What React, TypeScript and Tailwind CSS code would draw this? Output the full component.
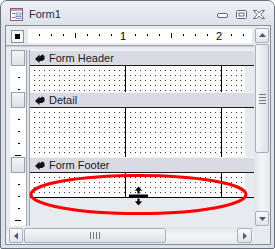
import React from 'react'

const DOTS =
  'bg-[linear-gradient(to_right,#fff_4px,transparent_4px),linear-gradient(to_bottom,#fff_4px,#3a3a3a_4px)] bg-[length:5px_5px]'

function FormIcon() {
  return (
    <svg width="13" height="13" viewBox="0 0 13 13" className="block">
      <rect x="0.5" y="0.5" width="12" height="12" fill="#fff" stroke="#8d5a7e" />
      <rect x="1" y="1" width="11" height="2" fill="#c99ab8" />
      <rect x="2" y="5" width="3" height="1" fill="#5d7fb8" />
      <rect x="6" y="5" width="5" height="2" fill="none" stroke="#5d7fb8" strokeWidth="0.8" />
      <rect x="2" y="9" width="3" height="1" fill="#5d7fb8" />
      <rect x="6" y="8.5" width="5" height="2" fill="none" stroke="#5d7fb8" strokeWidth="0.8" />
    </svg>
  )
}

function WinButtons() {
  return (
    <div className="ml-auto flex items-center">
      <svg width="11" height="9" viewBox="0 0 11 9" className="block">
        <rect x="0.5" y="3.5" width="10" height="4" rx="1.5" fill="#fff" stroke="#5f6874" />
      </svg>
      <svg width="11" height="9" viewBox="0 0 11 9" className="block ml-[8px]">
        <rect x="0.5" y="0.5" width="10" height="8" rx="1" fill="#fff" stroke="#5f6874" />
        <rect x="3" y="3" width="5" height="3" fill="none" stroke="#5f6874" />
      </svg>
      <svg width="12" height="9" viewBox="0 0 12 9" className="block ml-[6px]">
        <path
          d="M0.5 0.5 H3.5 L6 2.8 L8.5 0.5 H11.5 L7.8 4.5 L11.5 8.5 H8.5 L6 6.2 L3.5 8.5 H0.5 L4.2 4.5 Z"
          fill="#fff"
          stroke="#5f6874"
        />
      </svg>
    </div>
  )
}

function HRuler() {
  const items: React.ReactNode[] = []
  for (let k = 1; k < 19; k++) {
    const x = -1 + k * 12
    if (k % 8 === 0) {
      items.push(
        <text key={k} x={x} y={10.5} fontSize="11" textAnchor="middle" fill="#000" fontFamily="'Liberation Sans', Arial, sans-serif">
          {k / 8}
        </text>
      )
    } else if (k % 4 === 0) {
      items.push(<rect key={k} x={x} y={4} width={1} height={5} fill="#000" />)
    } else {
      items.push(<rect key={k} x={x} y={5} width={1} height={2} fill="#000" />)
    }
  }
  return (
    <svg width="224" height="14" className="block bg-white">
      {items}
    </svg>
  )
}

function VRuler({ h }: { h: number }) {
  const ticks: number[] = []
  for (let y = 11; y < h; y += 12) ticks.push(y)
  return (
    <svg width="16" height={h} className="block bg-white">
      {ticks.map((y, i) => {
        const long = (i + 1) % 4 === 0
        return <rect key={y} x={long ? 5 : 8} y={y} width={long ? 6 : 2} height={1} fill="#000" />
      })}
    </svg>
  )
}

// the little black "section" arrow in front of each bar label
function SectionIcon() {
  return (
    <svg width="10" height="9" viewBox="0 0 10 9" className="block">
      <path d="M0 5 L4.5 0.5 L4.5 2.5 L7.5 0.5 L9.5 2 L9.5 5.5 L7 7 L4.5 7 L4.5 9 Z" fill="#111" />
    </svg>
  )
}

function Bar({ label }: { label: string }) {
  return (
    <div className="flex h-[16px]">
      <div className="w-[24px] flex">
        <div className="w-[5px]" />
        <div className="w-[14px] border border-[#9aa1ab] bg-gradient-to-b from-[#f4f5f7] to-[#dde1e6]" />
        <div className="w-[1px]" />
        <div className="w-[4px] border-x border-[#9ea5ae] bg-[#dfe3e8]" />
      </div>
      <div className="w-[224px] flex items-center pl-[5px] gap-[4px] bg-[#dadae4] border-t border-t-[#f4f4f8] border-b border-b-[#1c1c1c]">
        <SectionIcon />
        <span className="text-[11px] leading-none text-[#1a1a1a]">{label}</span>
      </div>
    </div>
  )
}

function DotArea({ className }: { className: string }) {
  return (
    <div className={`flex ${className}`}>
      <div className={`w-[95px] ${DOTS}`} />
      <div className="w-px bg-black" />
      <div className={`w-[95px] ${DOTS}`} />
      <div className="w-px bg-black" />
      <div className={`w-[23px] ${DOTS}`} />
      <div className="flex-1 bg-[#e7eaee]" />
    </div>
  )
}

function LeftRuler({ h }: { h: number }) {
  return (
    <div className="w-[24px] flex">
      <div className="w-[4px]" />
      <VRuler h={h} />
      <div className="w-[4px] border-x border-[#9ea5ae] bg-[#dfe3e8]" />
    </div>
  )
}

function Section({ h, cls }: { h: number; cls: string }) {
  return (
    <div className="flex">
      <LeftRuler h={h} />
      <div className="w-[224px]">
        <DotArea className={cls} />
      </div>
    </div>
  )
}

function ScrollBtn({ dir, className }: { dir: 'up' | 'down' | 'left' | 'right'; className: string }) {
  const paths = {
    up: 'M2 6 L5.5 2 L9 6 Z',
    down: 'M2 3 L9 3 L5.5 7 Z',
    left: 'M6 1.5 L2 5 L6 8.5 Z',
    right: 'M3 1.5 L7 5 L3 8.5 Z',
  }
  const vert = dir === 'up' || dir === 'down'
  return (
    <div
      className={`flex items-center justify-center rounded-[2px] border border-[#a9b0b9] bg-gradient-to-b from-[#fafbfc] to-[#dfe3e8] ${className}`}
    >
      <svg width={vert ? 11 : 9} height={vert ? 9 : 10} viewBox={vert ? '0 0 11 9' : '0 0 9 10'} className="block">
        <path d={paths[dir]} fill="#4a5c80" />
      </svg>
    </div>
  )
}

export default function App() {
  return (
    <div className="relative w-[275px] h-[249px] overflow-hidden bg-white font-['Liberation_Sans',Arial,sans-serif]">
      <div className="w-full h-full border border-[#6a717c] rounded-t-[7px] rounded-b-[2px] bg-[#dde2e9] flex flex-col">
        {/* title bar */}
        <div className="h-[24px] flex items-center pt-[3px] pl-[9px] pr-[9px] rounded-t-[6px] bg-gradient-to-b from-[#eef1f5] to-[#dde2e9]">
          <FormIcon />
          <span className="ml-[6px] text-[11px] leading-none text-[#1e2d44]">Form1</span>
          <WinButtons />
        </div>

        {/* client */}
        <div className="ml-[4px] w-[266px] h-[220px] border border-[#858d98] bg-[#e7eaee] grid grid-cols-[24px_224px_16px] grid-rows-[24px_177px_17px]">
          {/* top ruler row */}
          <div className="col-span-2 flex flex-col">
            <div className="flex items-start h-[19px] pt-[4px]">
              <div className="ml-[5px] w-[13px] h-[13px] border border-[#8b929c] bg-[#f7f8fa] flex items-center justify-center">
                <div className="w-[5px] h-[5px] bg-black" />
              </div>
              <div className="ml-[4px] -mt-px">
                <HRuler />
              </div>
            </div>
            <div className="h-px bg-[#9ea5ae]" />
            <div className="h-px bg-[#c6cbd2]" />
            <div className="flex-1" />
          </div>

          {/* vertical scrollbar */}
          <div className="row-span-2 flex flex-col items-center bg-gradient-to-r from-[#e0e3e7] via-[#f4f5f7] to-[#e5e8eb] pt-[2px] pb-[1px]">
            <ScrollBtn dir="up" className="w-[14px] h-[15px]" />
            <div className="mt-px w-[14px] h-[109px] rounded-[2px] border border-[#a9b0b9] bg-gradient-to-r from-[#f6f7f9] to-[#dde1e6] flex flex-col items-center justify-center gap-[2px]">
              <div className="w-[7px] h-px bg-[#6f7886]" />
              <div className="w-[7px] h-px bg-[#6f7886]" />
              <div className="w-[7px] h-px bg-[#6f7886]" />
              <div className="w-[7px] h-px bg-[#6f7886]" />
            </div>
            <div className="flex-1" />
            <ScrollBtn dir="down" className="w-[14px] h-[15px]" />
          </div>

          {/* form body */}
          <div className="col-span-2 flex flex-col overflow-hidden">
            <Bar label="Form Header" />
            <Section h={26} cls="h-[26px]" />
            <Bar label="Detail" />
            <Section h={49} cls="h-[49px]" />
            <Bar label="Form Footer" />
            <div className="flex">
              <div className="flex flex-col">
                <LeftRuler h={53} />
                <div className="h-px" />
              </div>
              <div className="w-[224px] flex flex-col">
                <DotArea className="h-[25px] border-b border-black" />
                <div className="flex-1 bg-[#e7eaee]" />
              </div>
            </div>
          </div>

          {/* horizontal scrollbar */}
          <div className="col-span-2 flex items-center pl-[3px] pr-[2px] bg-gradient-to-b from-[#e0e3e7] via-[#f4f5f7] to-[#e5e8eb]">
            <ScrollBtn dir="left" className="w-[14px] h-[15px]" />
            <div className="ml-px w-[142px] h-[15px] rounded-[2px] border border-[#a9b0b9] bg-gradient-to-b from-[#f6f7f9] to-[#dde1e6] flex items-center justify-center gap-[2px]">
              <div className="w-px h-[7px] bg-[#6f7886]" />
              <div className="w-px h-[7px] bg-[#6f7886]" />
              <div className="w-px h-[7px] bg-[#6f7886]" />
              <div className="w-px h-[7px] bg-[#6f7886]" />
            </div>
            <div className="flex-1" />
            <ScrollBtn dir="right" className="w-[15px] h-[15px]" />
          </div>
          <div className="bg-[#e7eaee]" />
        </div>
      </div>

      {/* red highlight ellipse and resize cursor, drawn over the window */}
      <svg width="275" height="249" className="absolute left-0 top-0 pointer-events-none">
        <ellipse cx="138.5" cy="194.5" rx="107.5" ry="19" fill="none" stroke="#f00" strokeWidth="3" />
        <g>
          <path d="M138.5 186 L143 191 L140 191 L140 194 L137 194 L137 191 L134 191 Z" fill="#000" stroke="#fff" strokeWidth="0.8" />
          <path d="M138.5 206 L143 201 L140 201 L140 198 L137 198 L137 201 L134 201 Z" fill="#000" stroke="#fff" strokeWidth="0.8" />
          <rect x="129" y="194.5" width="19" height="3" fill="#000" />
        </g>
      </svg>
    </div>
  )
}
